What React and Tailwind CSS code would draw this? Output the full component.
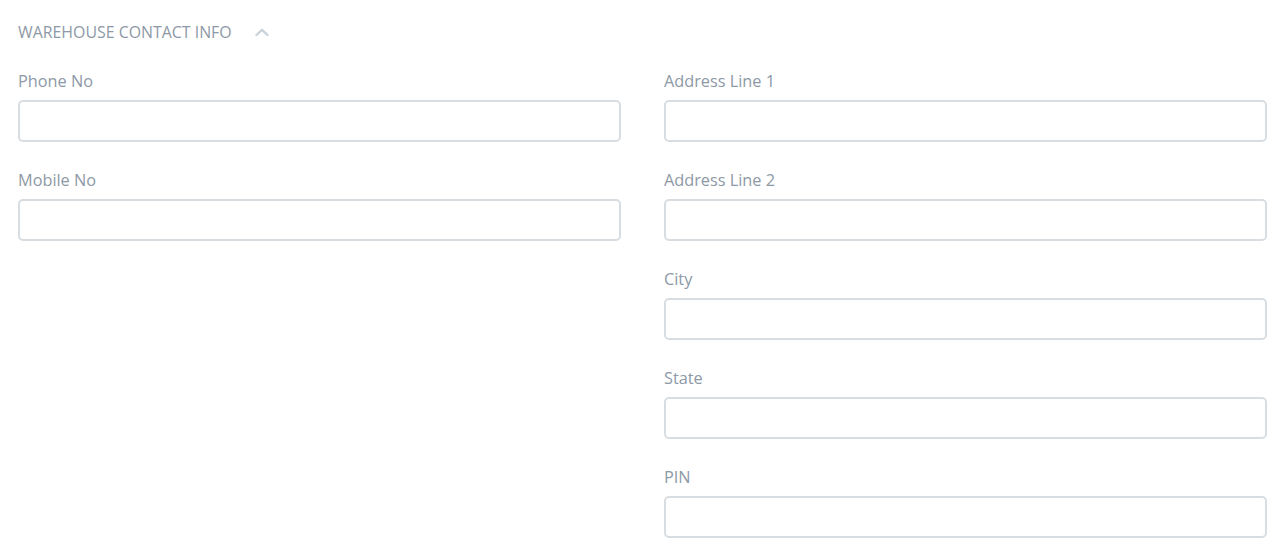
const leftFields = ['Phone No', 'Mobile No']
const rightFields = ['Address Line 1', 'Address Line 2', 'City', 'State', 'PIN']

const Field = ({ label }) => (
  <div className="mb-[28px]">
    <label className="block h-5 text-[16.3px] leading-5 text-[#8d99a6]">{label}</label>
    <input
      type="text"
      className="mt-[9px] block h-[42px] w-full rounded-[5px] border-2 border-[#d8dde2] bg-white px-3 text-[15px] outline-none"
    />
  </div>
)

export default function App() {
  return (
    <div
      className="min-h-[553px] bg-white pl-[18px] pr-[13px] pt-[22px]"
      style={{ fontFamily: '"Open Sans", Lato, sans-serif' }}
    >
      <div className="flex h-5 items-center gap-[22px]">
        <span className="text-[15.9px] uppercase leading-5 text-[#8d99a6]">Warehouse Contact Info</span>
        <svg width="16" height="10" viewBox="0 0 16 10" fill="none" className="text-[#cbd2d8]">
          <path d="M2.5 8 8 2.8 13.5 8" stroke="currentColor" strokeWidth="2.4" strokeLinecap="round" strokeLinejoin="round" />
        </svg>
      </div>
      <div className="mt-[29px] grid grid-cols-2 gap-x-[43px]">
        <div>
          {leftFields.map((f) => (
            <Field key={f} label={f} />
          ))}
        </div>
        <div>
          {rightFields.map((f) => (
            <Field key={f} label={f} />
          ))}
        </div>
      </div>
    </div>
  )
}
